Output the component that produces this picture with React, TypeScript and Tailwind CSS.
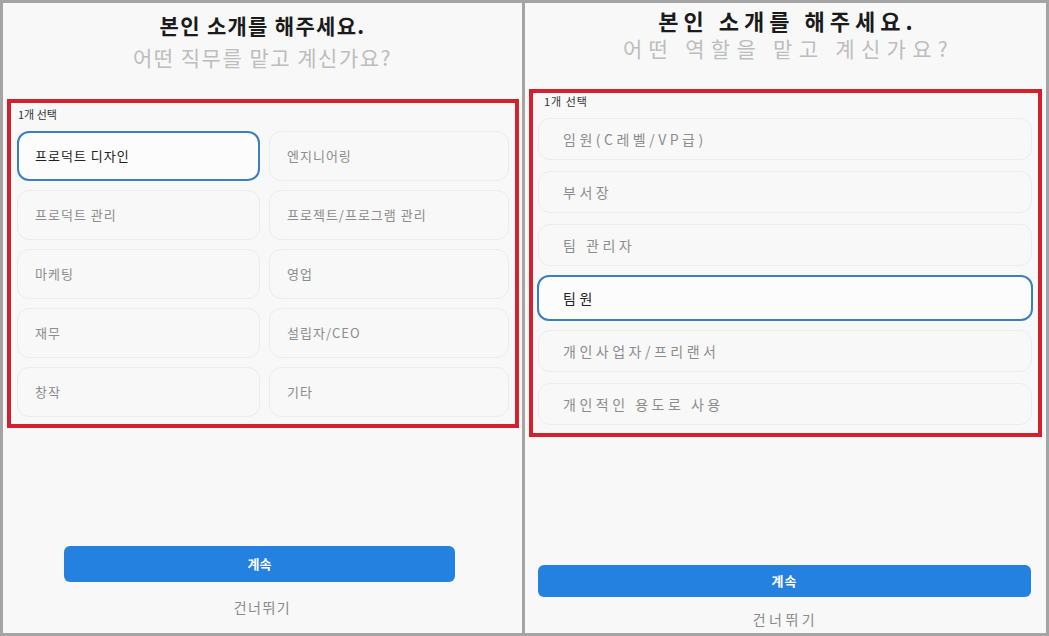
const font = { fontFamily: '"Noto Sans CJK KR", "Noto Sans", sans-serif' };

const jobs = ['프로덕트 디자인', '엔지니어링', '프로덕트 관리', '프로젝트/프로그램 관리', '마케팅', '영업', '재무', '설립자/CEO', '창작', '기타'];
const roles = ['임원(C레벨/VP급)', '부서장', '팀 관리자', '팀원', '개인사업자/프리랜서', '개인적인 용도로 사용'];

const JobPanel = () => (
  <div className="w-[519px] h-full bg-[#f8f8f8] flex flex-col">
    <div className="pt-[8px] text-center">
      <div className="text-[21px] leading-[28px] font-bold tracking-[1.3px] text-[#1b1b1b]">본인 소개를 해주세요.</div>
      <div className="mt-[4px] text-[21px] leading-[28px] tracking-[1.5px] text-[#bdbdbd]">어떤 직무를 맡고 계신가요?</div>
    </div>

    <div className="mt-[28px] ml-[4px] w-[512px] border-[4px] border-[#d3202f] px-[6px] pt-[4px] pb-[7px]">
      <div className="pl-[1px] text-[11px] leading-[14px] text-[#333]">1개 선택</div>
      <div className="mt-[10px] grid grid-cols-[243px_240px] gap-x-[9px] gap-y-[9px]">
        {jobs.map((j, i) =>
          i === 0 ? (
            <div key={j} className="h-[50px] rounded-[12px] border-2 border-[#3b7fbf] bg-[#fcfcfc] flex items-center pl-[16px] text-[13px] tracking-[1px] text-[#222]">
              {j}
            </div>
          ) : (
            <div key={j} className="h-[50px] rounded-[12px] border border-[#ececec] bg-[#f8f8f8] flex items-center pl-[17px] text-[13px] tracking-[1px] text-[#8c8c8c]">
              {j}
            </div>
          )
        )}
      </div>
    </div>

    <div className="mt-auto pb-[16px] flex flex-col items-center">
      <button className="w-[391px] h-[36px] rounded-[6px] bg-[#2581e0] text-white text-[13px] font-bold -ml-[6px]">계속</button>
      <div className="mt-[15px] text-[14px] leading-[20px] tracking-[1.5px] text-[#8a8a8a]">건너뛰기</div>
    </div>
  </div>
);

const RolePanel = () => (
  <div className="flex-1 h-full bg-[#f8f8f8] flex flex-col">
    <div className="pt-[3px] text-center">
      <div className="text-[22px] leading-[28px] font-bold tracking-[5px] text-[#1b1b1b] pl-[5px]">본인 소개를 해주세요.</div>
      <div className="text-[21px] leading-[28px] tracking-[6.3px] text-[#bdbdbd] pl-[6px]">어떤 역할을 맡고 계신가요?</div>
    </div>

    <div className="mt-[27px] ml-[4px] w-[513px] border-[4px] border-[#d3202f] pl-[5px] pr-[6px] pt-[1px] pb-[8px]">
      <div className="pl-[6px] text-[11px] leading-[14px] tracking-[1px] text-[#333]">1개 선택</div>
      <div className="mt-[10px] flex flex-col gap-[11px]">
        {roles.map((r) =>
          r === '팀원' ? (
            <div key={r} className="h-[46px] -my-[2px] -mx-[1px] rounded-[12px] border-2 border-[#3b7fbf] bg-[#fcfcfc] flex items-center pl-[24px] text-[14px] tracking-[3.5px] text-[#222]">
              {r}
            </div>
          ) : (
            <div key={r} className="h-[42px] rounded-[12px] border border-[#ececec] bg-[#f8f8f8] flex items-center pl-[24px] text-[14px] tracking-[3.5px] text-[#8c8c8c]">
              {r}
            </div>
          )
        )}
      </div>
    </div>

    <div className="mt-auto pb-[5px] flex flex-col items-center">
      <button className="w-[493px] h-[32px] rounded-[6px] bg-[#2581e0] text-white text-[13px] font-bold tracking-[1px] -ml-[2px]">계속</button>
      <div className="mt-[13px] text-[14px] leading-[18px] tracking-[3.5px] text-[#8a8a8a]">건너뛰기</div>
    </div>
  </div>
);

export default function App() {
  return (
    <div className="w-[1049px] h-[636px] bg-[#a4a4a4] p-[3px] flex gap-[3px]" style={font}>
      <JobPanel />
      <RolePanel />
    </div>
  );
}
